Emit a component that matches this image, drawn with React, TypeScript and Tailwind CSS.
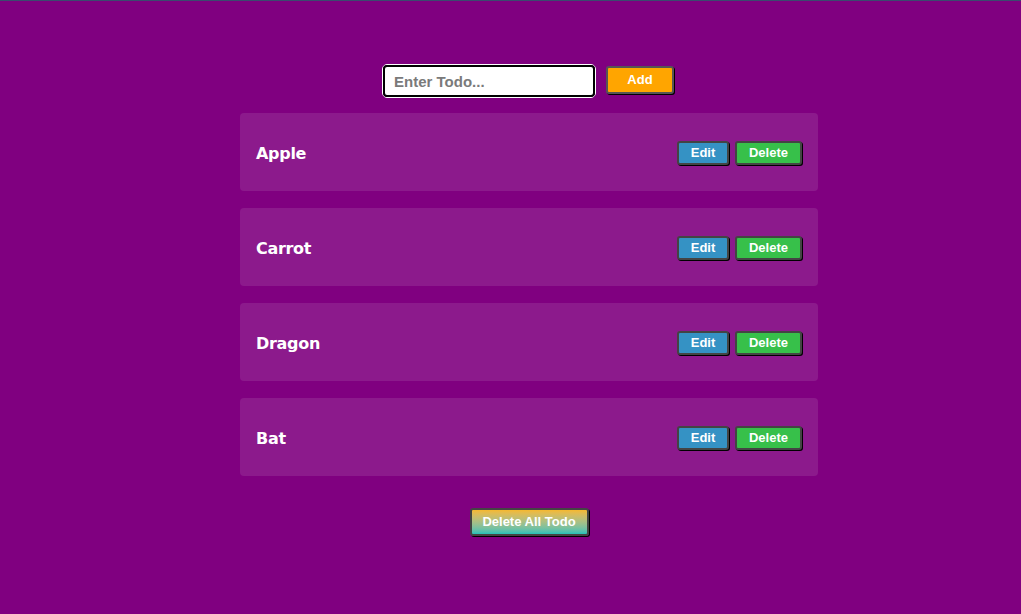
import React from "react";

const items = ["Apple", "Carrot", "Dragon", "Bat"];

export default function App() {
  return (
    <div className="min-h-[614px] w-full bg-[#800080] border-t border-[#3a4a6e] font-['Liberation_Sans',Arial,sans-serif]">
      <div className="flex flex-col items-center pt-[63px] pl-[37px]">
        <div className="flex items-start gap-[10px] pr-[2px]">
          <div className="rounded-[5px] border border-white">
            <input
              className="block w-[212px] h-[32px] rounded-[4px] border-2 border-black bg-white px-[9px] text-[15px] font-bold text-black placeholder:text-[#7a7a7a] outline-none font-['Liberation_Sans',Arial,sans-serif]"
              placeholder="Enter Todo..."
            />
          </div>
          <button className="mt-[2px] w-[68px] h-[28px] rounded-[3px] border-2 border-[#555] bg-[#ffa500] text-white text-[13px] font-bold shadow-[1px_1px_0_#000]">
            Add
          </button>
        </div>
        <div className="mt-[15px] flex w-[578px] flex-col gap-[17px]">
          {items.map((t) => (
            <div
              key={t}
              className="flex h-[78px] items-center justify-between rounded-[4px] bg-[#8c1a8c] pl-[16px] pr-[16px] pt-[2px]"
            >
              <span className="mt-[2px] text-white text-[16px] font-bold font-['DejaVu_Sans',sans-serif] tracking-[-0.3px]">
                {t}
              </span>
              <div className="flex items-center gap-[6px]">
                <button className="w-[52px] h-[24px] rounded-[3px] border-2 border-[#444] bg-[#3592c4] text-white text-[13px] font-bold shadow-[1px_1px_0_#000]">
                  Edit
                </button>
                <button className="w-[67px] h-[24px] rounded-[3px] border-2 border-[#444] bg-[#37c04a] text-white text-[13px] font-bold shadow-[1px_1px_0_#000]">
                  Delete
                </button>
              </div>
            </div>
          ))}
        </div>
        <button className="mt-[32px] w-[119px] h-[28px] rounded-[3px] border-2 border-[#444] bg-gradient-to-b from-[#f5b82e] to-[#20c0b8] text-white text-[13px] font-bold shadow-[1px_1px_0_#000]">
          Delete All Todo
        </button>
      </div>
    </div>
  );
}
